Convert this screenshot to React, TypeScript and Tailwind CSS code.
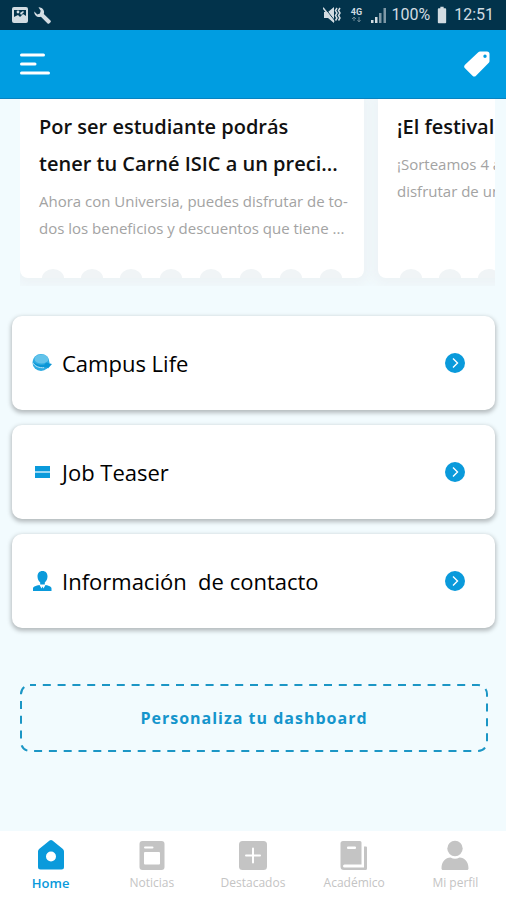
import { MdBatteryFull } from "react-icons/md";

const navItems = [
  { label: "Home", icon: HomeIcon, active: true },
  { label: "Noticias", icon: NewsIcon, active: false },
  { label: "Destacados", icon: PlusIcon, active: false },
  { label: "Académico", icon: BookIcon, active: false },
  { label: "Mi perfil", icon: ProfileIcon, active: false },
];

const links = [
  { label: "Campus Life", icon: GlobeIcon },
  { label: "Job Teaser", icon: BarsIcon },
  { label: "Información  de contacto", icon: ContactIcon },
];

function HomeIcon() {
  return (
    <svg width="28" height="30" viewBox="0 0 28 30" fill="currentColor" aria-hidden="true">
      <path
        fillRule="evenodd"
        d="M12.600.6a2.400 2.400 0 0 1 2.800 0l10.200 8.200A3.400 3.400 0 0 1 27 11.600V27a2.500 2.500 0 0 1-2.500 2.500h-21A2.500 2.500 0 0 1 1 27V11.600a3.400 3.400 0 0 1 1.400-2.800zM14 11.500a5 5 0 1 0 0 10 5 5 0 0 0 0-10z"
      />
    </svg>
  );
}

function NewsIcon() {
  return (
    <svg width="26" height="30" viewBox="0 0 26 30" aria-hidden="true">
      <rect x="0.500" y="1" width="25" height="29" rx="3" fill="currentColor" />
      <rect x="5" y="6.500" width="9.500" height="2" rx="1" fill="white" />
      <rect x="5" y="12" width="16" height="12.500" rx="1" fill="white" />
    </svg>
  );
}

function PlusIcon() {
  return (
    <svg width="28" height="30" viewBox="0 0 28 30" aria-hidden="true">
      <rect x="0" y="1" width="28" height="29" rx="3.500" fill="currentColor" />
      <path d="M14 8.500v14M7 15.500h14" stroke="white" strokeWidth="2" strokeLinecap="round" />
    </svg>
  );
}

function BookIcon() {
  return (
    <svg width="28" height="30" viewBox="0 0 28 30" aria-hidden="true">
      <path
        d="M3 1h17a1.500 1.500 0 0 1 1.500 1.500V24.500H4.500a1.500 1.500 0 0 0 0 3H24V6.500h2a1 1 0 0 1 1 1v21a1.500 1.500 0 0 1-1.500 1.500H4a3.500 3.500 0 0 1-3.500-3.500v-23A2.500 2.500 0 0 1 3 1z"
        fill="currentColor"
      />
      <rect x="7" y="6.500" width="9" height="2.500" rx="1" fill="white" />
    </svg>
  );
}

function ProfileIcon() {
  return (
    <svg width="28" height="30" viewBox="0 0 28 30" fill="currentColor" aria-hidden="true">
      <circle cx="14" cy="8.500" r="7.700" />
      <path d="M.5 28.500c0-7 4-11 9-11 1.500.8 3 1.200 4.500 1.200s3-.4 4.500-1.200c5 0 9 4 9 11 0 .9-.6 1.500-1.500 1.500H2c-.9 0-1.500-.6-1.500-1.500z" />
    </svg>
  );
}

function GlobeIcon() {
  return (
    <svg width="20" height="20" viewBox="0 0 20 20" aria-hidden="true">
      <circle cx="9" cy="9.500" r="8.500" fill="#2cabe2" />
      <ellipse cx="9.500" cy="6" rx="7" ry="4.500" fill="#63c3ea" />
      <path d="M.5 7c1 3.500 6 5.500 12 4.500l1.500-2 6 1.500-4 4.500-1.500-1.200C9 16 2 13 .5 7z" fill="#0a96d6" />
      <path d="M.7 9.500c2 4 6.500 5.500 11.500 5.200" fill="none" stroke="#b5e2f5" strokeWidth="1" />
    </svg>
  );
}

function BarsIcon() {
  return (
    <svg width="20" height="20" viewBox="0 0 20 20" aria-hidden="true">
      <path d="M3 4h15v12H3z" fill="#0a9adb" />
      <path d="M3 10h15" stroke="#9bd7f3" strokeWidth="2" />
    </svg>
  );
}

function ContactIcon() {
  return (
    <svg width="20" height="20" viewBox="0 0 20 20" fill="#0a9adb" aria-hidden="true">
      <path d="M10.500 0c3.200 0 5 2.200 5 5.300 0 2.700-1.200 5-2.700 6.200v2h-4.600v-2C6.700 10.300 5.500 8 5.500 5.300 5.500 2.200 7.300 0 10.500 0z" />
      <path d="M1 20v-2.500c0-2 3-2.800 6.500-3.500l2 3.500 1-2 1 2 2-3.500c3.500.7 6 1.500 6 3.500V20z" />
    </svg>
  );
}

function StatusBar() {
  return (
    <div className="flex h-[30px] items-center justify-between bg-[#02334b] px-3 text-[#d2dce2]">
      <div className="flex items-center gap-1.5">
        <svg width="16" height="16" viewBox="0 0 16 16" aria-hidden="true">
          <rect x="0" y="0" width="16" height="16" rx="2" fill="currentColor" />
          <path d="M2 3h12v6l-3-2-3 3-2-2-4 2z" fill="#02334b" />
          <circle cx="6" cy="5" r="1.400" fill="currentColor" />
          <path d="M8 6l3-2 1 1-3 3z" fill="currentColor" />
        </svg>
        <svg width="17" height="17" viewBox="0 0 17 17" aria-hidden="true">
          <path
            d="M4.500.3a5 5 0 0 1 5.300 6.600l6.700 6.700a1.200 1.200 0 0 1 0 1.600l-1.300 1.300a1.200 1.200 0 0 1-1.600 0L6.900 9.800A5 5 0 0 1 .3 4.500l3 2.900 2.600-.9.800-2.700z"
            fill="currentColor"
          />
        </svg>
      </div>
      <div className="flex items-center gap-1 font-[Roboto,sans-serif] text-base leading-none">
        <svg width="18" height="16" viewBox="0 0 18 16" aria-hidden="true">
          <path d="M1 5h4l6-5v16l-6-5H1z" fill="currentColor" />
          <path d="M1 0l11 14" stroke="#02334b" strokeWidth="1" />
          <path d="M0 .8l11 14" stroke="currentColor" strokeWidth="1.500" />
          <path
            d="M14 1l-1.500 2.500L14 6l-1.500 2.500L14 11l-1.500 2.500M17 1l-1.500 2.500L17 6l-1.500 2.500L17 11l-1.500 2.500"
            fill="none"
            stroke="currentColor"
            strokeWidth="1.500"
          />
        </svg>
        <div className="flex w-[22px] flex-col items-center">
          <span className="text-[9px] font-bold leading-[9px]">4G</span>
          <svg width="10" height="5" viewBox="0 0 10 5" className="opacity-50" aria-hidden="true">
            <path d="M3 0v4M1 2l2-2 2 2M8 0v4M6.500 3L8 5l1.500-2" fill="none" stroke="currentColor" />
          </svg>
        </div>
        <svg width="16" height="16" viewBox="0 0 16 16" aria-hidden="true">
          <path d="M0 13h2.500v3H0zM4 10h2.500v6H4z" fill="currentColor" />
          <path d="M8 6h2.500v10H8zM12.500 1H15v15h-2.500z" fill="currentColor" opacity="0.600" />
        </svg>
        <span>100%</span>
        <MdBatteryFull className="-mx-0.5 size-5" />
        <span>12:51</span>
      </div>
    </div>
  );
}

function Header() {
  return (
    <header className="flex h-[69px] items-center justify-between border-b border-[#0883c0] bg-[#009de1] pl-5 pr-4">
      <button type="button" aria-label="Menú">
        <svg width="30" height="24" viewBox="0 0 30 24" aria-hidden="true">
          <path d="M1.500 3h22M1.500 12h13.500M1.500 21h27" stroke="white" strokeWidth="3" strokeLinecap="round" />
        </svg>
      </button>
      <button type="button" aria-label="Ofertas">
        <svg width="26" height="26" viewBox="0 0 26 26" aria-hidden="true">
          <path
            fillRule="evenodd"
            d="M16 .5h7A2.500 2.500 0 0 1 25.500 3v7a2.500 2.500 0 0 1-.7 1.700L12 24.700a2.500 2.500 0 0 1-3.500 0L1 17.300a2.500 2.500 0 0 1 0-3.500L14.300 1.200A2.500 2.500 0 0 1 16 .5zM21 3.500a1.700 1.700 0 1 0 0 3.400 1.700 1.700 0 0 0 0-3.400z"
            fill="white"
          />
        </svg>
      </button>
    </header>
  );
}

function Notches() {
  return (
    <svg className="absolute inset-x-0 bottom-0 w-full" height="9" aria-hidden="true">
      {[33, 72, 111, 151, 191, 231, 271, 311].map((cx) => (
        <ellipse key={cx} cx={cx} cy="9" rx="11" ry="9" fill="#f0f4f6" />
      ))}
    </svg>
  );
}

function Offers() {
  return (
    <section className="ml-5 mr-[11px] flex h-[187px] gap-3.5 overflow-hidden">
      <article className="relative h-[179px] w-[344px] shrink-0 rounded-b-lg bg-white px-[19px] pt-[9px] shadow-[0_2px_12px_6px_#edf3f6]">
        <h2 className="whitespace-nowrap text-xl font-semibold leading-[37px] text-[#111]">
          Por ser estudiante podrás
          <br />
          tener tu Carné ISIC a un preci...
        </h2>
        <p className="mt-1.5 whitespace-nowrap text-[15px] leading-[27px] text-[#a3a3a3]">
          Ahora con Universia, puedes disfrutar de to-
          <br />
          dos los beneficios y descuentos que tiene ...
        </p>
        <Notches />
      </article>
      <article className="relative h-[179px] w-[344px] shrink-0 rounded-b-lg bg-white px-[19px] pt-[9px] shadow-[0_2px_12px_6px_#edf3f6]">
        <h2 className="whitespace-nowrap text-xl font-semibold leading-[37px] text-[#111]">¡El festival</h2>
        <p className="mt-1.5 whitespace-nowrap text-[15px] leading-[27px] text-[#a3a3a3]">
          ¡Sorteamos 4 a
          <br />
          disfrutar de un
        </p>
        <Notches />
      </article>
    </section>
  );
}

function BottomNav() {
  return (
    <nav className="mt-auto grid h-[69px] grid-cols-5 bg-white pt-[9px]">
      {navItems.map(({ label, icon: Icon, active }) => (
        <a
          key={label}
          href="#"
          className={
            active
              ? "flex flex-col items-center gap-1 text-[13px] font-semibold leading-[18px] text-[#0a9adb]"
              : "flex flex-col items-center gap-1 text-xs leading-[18px] text-[#c4c4c4]"
          }
        >
          <Icon />
          {label}
        </a>
      ))}
    </nav>
  );
}

export default function App() {
  return (
    <div className="flex min-h-screen flex-col bg-[#f2fbfe] font-['Open_Sans',sans-serif]">
      <StatusBar />
      <Header />
      <main>
        <Offers />

        <div className="ml-3 mr-[11px] mt-[30px] flex flex-col gap-[15px]">
          {links.map(({ label, icon: Icon }) => (
            <a
              key={label}
              href="#"
              className="flex h-[94px] items-center rounded-[10px] bg-white pl-5 pr-[30px] shadow-[0_2px_4px_1px_rgba(0,0,0,0.25)]"
            >
              <Icon />
              <span className="ml-2.5 whitespace-pre text-[22px] font-medium text-black">{label}</span>
              <svg className="ml-auto" width="20" height="20" viewBox="0 0 20 20" aria-hidden="true">
                <circle cx="10" cy="10" r="10" fill="#0a9adb" />
                <path d="M8 5.500l4.500 4.500L8 14.500" fill="none" stroke="white" strokeWidth="1.400" />
              </svg>
            </a>
          ))}
        </div>

        <button
          type="button"
          className="relative ml-5 mt-14 flex h-[68px] w-[calc(100%-38px)] items-center justify-center text-base font-bold tracking-[1px] text-[#1595cc]"
        >
          <svg className="absolute left-px top-px h-[calc(100%-2px)] w-[calc(100%-2px)] overflow-visible" aria-hidden="true">
            <rect width="100%" height="100%" rx="9" fill="none" stroke="#1c96c5" strokeWidth="2" strokeDasharray="8 6.800" strokeDashoffset="2" />
          </svg>
          Personaliza tu dashboard
        </button>
      </main>
      <BottomNav />
    </div>
  );
}
